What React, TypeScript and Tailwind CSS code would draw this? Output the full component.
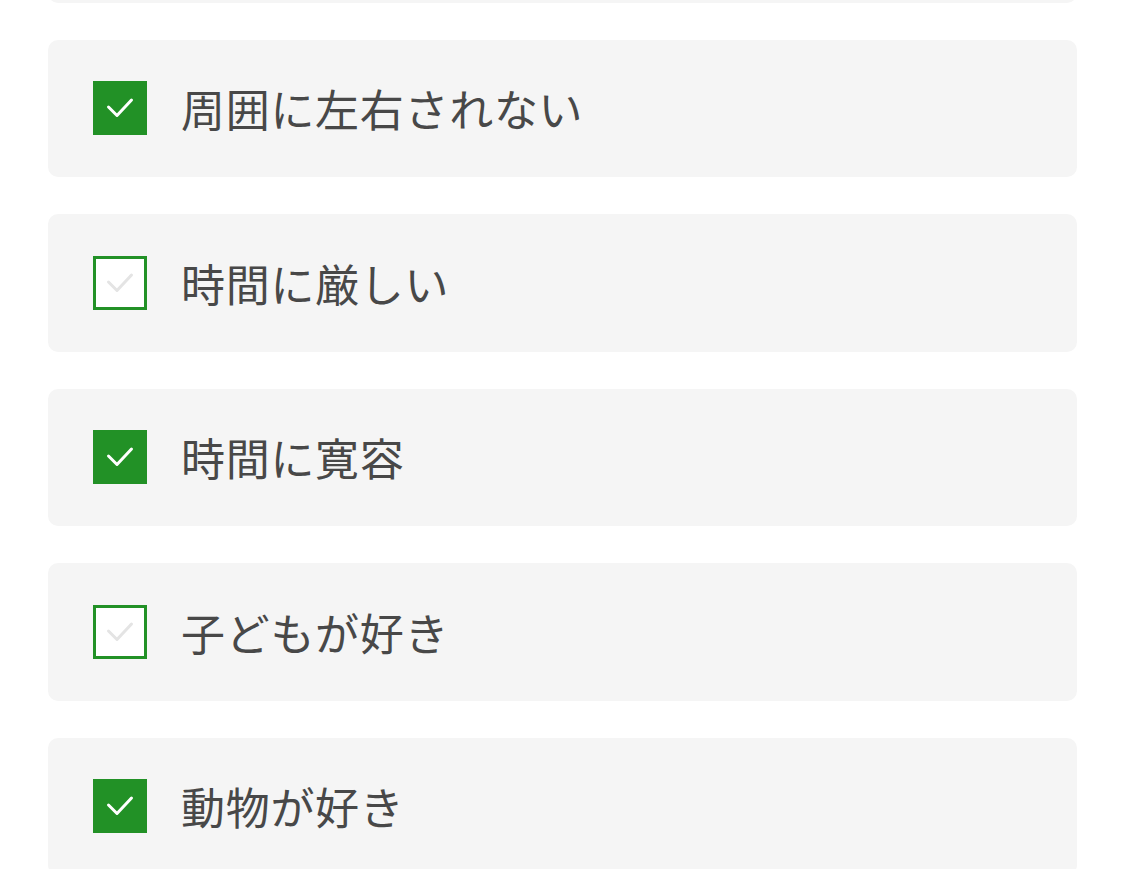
import React from "react";

const items: { label: string; checked: boolean }[] = [
  { label: "", checked: false },
  { label: "周囲に左右されない", checked: true },
  { label: "時間に厳しい", checked: false },
  { label: "時間に寛容", checked: true },
  { label: "子どもが好き", checked: false },
  { label: "動物が好き", checked: true },
];

function Check({ checked }: { checked: boolean }) {
  return (
    <div
      className={
        checked
          ? "w-[54px] h-[54px] shrink-0 bg-[#229126] flex items-center justify-center"
          : "w-[54px] h-[54px] shrink-0 bg-white border-[3px] border-[#229126] flex items-center justify-center"
      }
    >
      <svg
        width="54"
        height="54"
        viewBox="0 0 54 54"
        className={checked ? "" : "-m-[3px]"}
      >
        <path
          d="M15.5 26 L24 34.5 L38.5 19"
          fill="none"
          stroke={checked ? "#ffffff" : "#e4e4e4"}
          strokeWidth="3"
          strokeLinecap="round"
          strokeLinejoin="round"
        />
      </svg>
    </div>
  );
}

export default function App() {
  return (
    <div
      className="w-[1125px] h-[869px] overflow-hidden bg-white"
      style={{ fontFamily: '"Noto Sans CJK JP", "Noto Sans", sans-serif' }}
    >
      <div className="flex flex-col gap-[37px] px-[48px] mt-[-135px]">
        {items.map((it, i) => (
          <div
            key={i}
            className="h-[137.5px] shrink-0 rounded-[10px] bg-[#f5f5f5] flex items-center pl-[45px] gap-[34px]"
          >
            {i > 0 && (
              <>
                <Check checked={it.checked} />
                <span className="text-[44px] leading-none text-[#484848] tracking-[0.7px]">
                  {it.label}
                </span>
              </>
            )}
          </div>
        ))}
      </div>
    </div>
  );
}
